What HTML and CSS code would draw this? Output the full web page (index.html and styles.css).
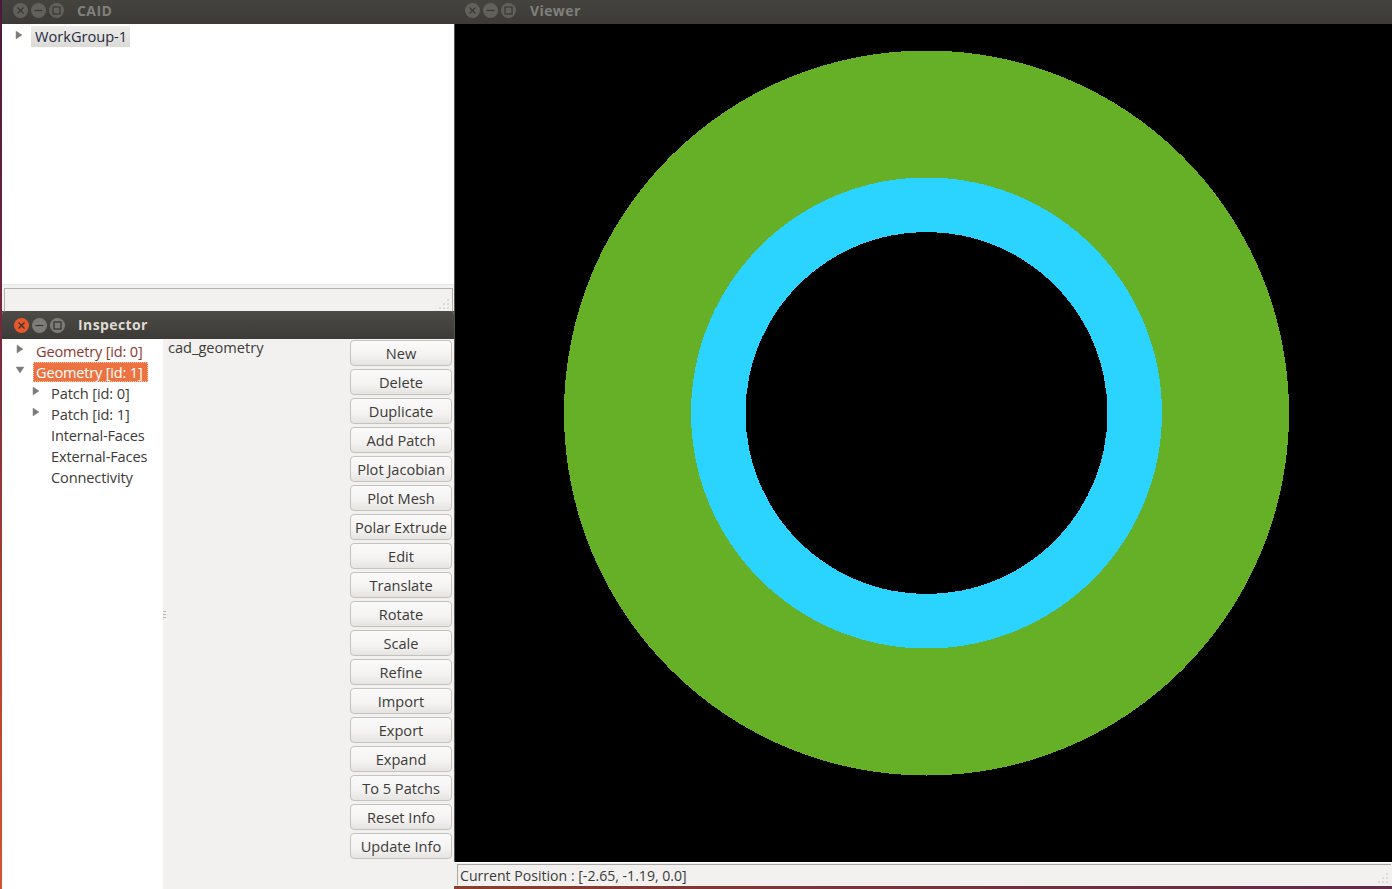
FILE: index.html
```html
<!DOCTYPE html>
<html>
<head>
  <meta charset="UTF-8">
  <title>CAID</title>
  <link rel="stylesheet" href="styles.css">
</head>
<body>
  <!-- CAID window -->
  <div class="window caid">
    <div class="titlebar">
      <div class="controls off">
        <span class="ctl"><svg viewBox="0 0 15 15"><path d="M4.5 4.5l6 6M10.5 4.5l-6 6"/></svg></span>
        <span class="ctl"><svg viewBox="0 0 15 15"><path d="M3.5 7.5h8"/></svg></span>
        <span class="ctl"><svg viewBox="0 0 15 15"><rect x="4" y="4" width="7" height="7"/></svg></span>
      </div>
      <span class="title off">CAID</span>
    </div>
    <div class="tree caid-tree">
      <div class="row">
        <svg class="arrow" viewBox="0 0 8 10"><path d="M1 1l6 4-6 4z"/></svg>
        <span class="workgroup">WorkGroup-1</span>
      </div>
    </div>
    <div class="caid-foot">
      <div class="sunken">
        <svg class="grip" viewBox="0 0 12 12"><path d="M9 1h2v2H9zM5 5h2v2H5zM9 5h2v2H9zM1 9h2v2H1zM5 9h2v2H5zM9 9h2v2H9z"/></svg>
      </div>
    </div>
  </div>

  <!-- Inspector window -->
  <div class="window inspector">
    <div class="titlebar active">
      <div class="controls">
        <span class="ctl close"><svg viewBox="0 0 15 15"><path d="M4.5 4.5l6 6M10.5 4.5l-6 6"/></svg></span>
        <span class="ctl"><svg viewBox="0 0 15 15"><path d="M3.5 7.5h8"/></svg></span>
        <span class="ctl"><svg viewBox="0 0 15 15"><rect x="4" y="4" width="7" height="7"/></svg></span>
      </div>
      <span class="title">Inspector</span>
    </div>
    <div class="inspector-body">
      <div class="tree geo-tree">
        <div class="row top"><svg class="arrow" viewBox="0 0 8 10"><path d="M1 1l6 4-6 4z"/></svg><span class="geo">Geometry [id: 0]</span></div>
        <div class="row top"><svg class="arrow down" viewBox="0 0 10 8"><path d="M1 1h8l-4 6z"/></svg><span class="geo selected">Geometry [id: 1]</span></div>
        <div class="row sub"><svg class="arrow" viewBox="0 0 8 10"><path d="M1 1l6 4-6 4z"/></svg><span>Patch [id: 0]</span></div>
        <div class="row sub"><svg class="arrow" viewBox="0 0 8 10"><path d="M1 1l6 4-6 4z"/></svg><span>Patch [id: 1]</span></div>
        <div class="row leaf"><span>Internal-Faces</span></div>
        <div class="row leaf"><span>External-Faces</span></div>
        <div class="row leaf"><span>Connectivity</span></div>
      </div>
      <div class="splitter"><i></i><i></i><i></i></div>
      <div class="info"><span class="info-name">cad_geometry</span></div>
      <div class="buttons">
        <button>New</button>
        <button>Delete</button>
        <button>Duplicate</button>
        <button>Add Patch</button>
        <button>Plot Jacobian</button>
        <button>Plot Mesh</button>
        <button>Polar Extrude</button>
        <button>Edit</button>
        <button>Translate</button>
        <button>Rotate</button>
        <button>Scale</button>
        <button>Refine</button>
        <button>Import</button>
        <button>Export</button>
        <button>Expand</button>
        <button>To 5 Patchs</button>
        <button>Reset Info</button>
        <button>Update Info</button>
      </div>
    </div>
  </div>

  <!-- Viewer window -->
  <div class="window viewer">
    <div class="titlebar">
      <div class="controls off">
        <span class="ctl"><svg viewBox="0 0 15 15"><path d="M4.5 4.5l6 6M10.5 4.5l-6 6"/></svg></span>
        <span class="ctl"><svg viewBox="0 0 15 15"><path d="M3.5 7.5h8"/></svg></span>
        <span class="ctl"><svg viewBox="0 0 15 15"><rect x="4" y="4" width="7" height="7"/></svg></span>
      </div>
      <span class="title off">Viewer</span>
    </div>
    <div class="canvas">
      <svg class="rings" width="937" height="838" viewBox="0 0 937 838">
        <circle cx="471.5" cy="389" r="362.5" fill="#65b026"/>
        <circle cx="471.5" cy="389" r="235.5" fill="#2ad4ff"/>
        <circle cx="471.5" cy="389" r="181" fill="#000"/>
      </svg>
    </div>
    <div class="status">
      <div class="status-text">
        <span>Current Position : [-2.65, -1.19, 0.0]</span>
        <svg class="grip" viewBox="0 0 12 12"><path d="M9 1h2v2H9zM5 5h2v2H5zM9 5h2v2H9zM1 9h2v2H1zM5 9h2v2H5zM9 9h2v2H9z"/></svg>
      </div>
    </div>
    <div class="strip"></div>
  </div>
</body>
</html>
```

FILE: styles.css
```css
/* Desktop behind the windows */
body {
  margin: 0;
  width: 1392px;
  height: 889px;
  overflow: hidden;
  position: relative;
  background: linear-gradient(#4a1a3a, #6a2342 30%, #b8452f 75%, #d2552e);
  font-family: "Open Sans", "Noto Sans", sans-serif;
  font-size: 14.6px;
  color: #3c3b37;
}
.window {
  position: absolute;
  display: flex;
  flex-direction: column;
  overflow: hidden;
}
.caid { left: 2px; top: 0; width: 452px; height: 311px; background: #fff; }
.inspector { left: 2px; top: 311px; width: 452px; height: 578px; background: #f2f1f0; border-radius: 4px 4px 0 0; }
.viewer { left: 454px; top: 0; width: 938px; height: 889px; background: #f2f1f0; }

/* Title bars */
.titlebar {
  height: 24px;
  box-sizing: border-box;
  padding-bottom: 3px;
  flex: none;
  display: flex;
  align-items: center;
  background: linear-gradient(#45433e, #3c3b37);
}
.titlebar.active {
  height: 28px;
  padding-bottom: 0;
  background: linear-gradient(#4d4b46, #3c3b37);
}
.controls { display: flex; gap: 3px; margin-left: 11px; }
.active .controls { margin-left: 12px; }
.controls.off { opacity: 0.55; }
.ctl {
  width: 15px;
  height: 15px;
  border-radius: 50%;
  background: #7d7c76;
  display: flex;
}
.ctl svg { width: 15px; height: 15px; fill: none; stroke: #33322e; stroke-width: 1.2; }
.ctl.close { background: #e8582c; }
.title {
  margin-left: 13px;
  font-weight: 700;
  font-size: 14px;
  letter-spacing: 0.4px;
  color: #dfdbd2;
}
.active .title { margin-top: -2px; }
.viewer .title { margin-left: 14px; }
.title.off { color: #7f807c; }

/* Trees */
.tree { background: #fff; }
.row { display: flex; align-items: center; height: 21px; white-space: nowrap; }
.arrow { width: 8px; height: 10px; fill: #7a7a76; stroke: #8a8a86; stroke-width: 0.5; flex: none; margin-top: -4px; }
.arrow.down { width: 10px; height: 8px; }

.caid-tree { flex: 1; padding: 2px 0 0 13px; }
.caid-tree .row { height: 21px; gap: 8px; }
.workgroup {
  background: linear-gradient(#eeedeb, #dcdad5);
  padding: 0 3px 0 4px;
  height: 21px;
  line-height: 21px;
  color: #1f2a44;
}
.caid-foot { height: 27px; flex: none; background: #f2f1f0; padding: 3px 1px 2px 2px; box-sizing: border-box; border-top: 1px solid #e6e5e3; }
.sunken {
  height: 21px;
  display: flex;
  justify-content: flex-end;
  align-items: flex-end;
  padding: 0 2px 1px 0;
  border: 1px solid #b5b3ae;
  border-bottom-color: #e0dfdc;
  background: #f2f1f0;
}
.grip { width: 12px; height: 12px; fill: #dddbd6; flex: none; }

/* Inspector */
.inspector-body { flex: 1; display: flex; min-height: 0; }
.geo-tree { width: 161px; flex: none; padding-top: 1px; box-sizing: border-box; }
.row.top { padding-left: 14px; }
.row.top .arrow { margin-right: 12px; }
.row.top .arrow.down { margin-left: -1px; margin-right: 11px; }
.geo { color: #8a3a30; padding: 0 3px; height: 20px; line-height: 20px; margin-left: -3px; width: 115px; box-sizing: border-box; letter-spacing: -0.2px; }
.geo.selected { background: #ec7341; color: #fff; outline: 1px dotted #f7c6ad; outline-offset: -1px; }
.row.sub { padding-left: 30px; letter-spacing: -0.1px; }
.row.sub .arrow { margin-right: 11px; }
.row.leaf { padding-left: 49px; letter-spacing: -0.15px; }
.splitter {
  width: 3px;
  flex: none;
  display: flex;
  flex-direction: column;
  justify-content: center;
  gap: 2px;
  box-sizing: border-box;
}
.splitter i { display: block; height: 1px; background: #b9b7b2; }
.info { flex: 1; padding: 0 0 0 2px; line-height: 16px; }
.info-name { display: block; }
.buttons { width: 102px; flex: none; margin-right: 2px; padding-top: 1px; display: flex; flex-direction: column; gap: 3px; }
button {
  height: 26px;
  padding: 0;
  font: inherit;
  color: #3c3b37;
  background: linear-gradient(#fbfafa, #f4f3f2 60%, #e6e4e1);
  border: 1px solid #c4c2bd;
  border-radius: 4px;
}

/* Viewer */
.canvas { height: 838px; flex: none; background: #000; border-left: 1px solid #55534e; }
.rings { display: block; shape-rendering: crispEdges; }
.status { height: 24px; flex: none; padding: 1px 1px 1px 3px; box-sizing: border-box; border-top: 1px solid #fff; }
.status-text {
  height: 21px;
  line-height: 21px;
  font-size: 14.1px;
  display: flex;
  justify-content: space-between;
  align-items: flex-end;
  box-sizing: border-box;
  padding: 0 2px 1px 2px;
  border-top: 1px solid #a9a7a2;
  border-left: 1px solid #a9a7a2;
}
.status-text span { align-self: center; padding-top: 2px; }
.strip { flex: 1; background: linear-gradient(to right, #8a3f2f, #5f2a4a); }
```
